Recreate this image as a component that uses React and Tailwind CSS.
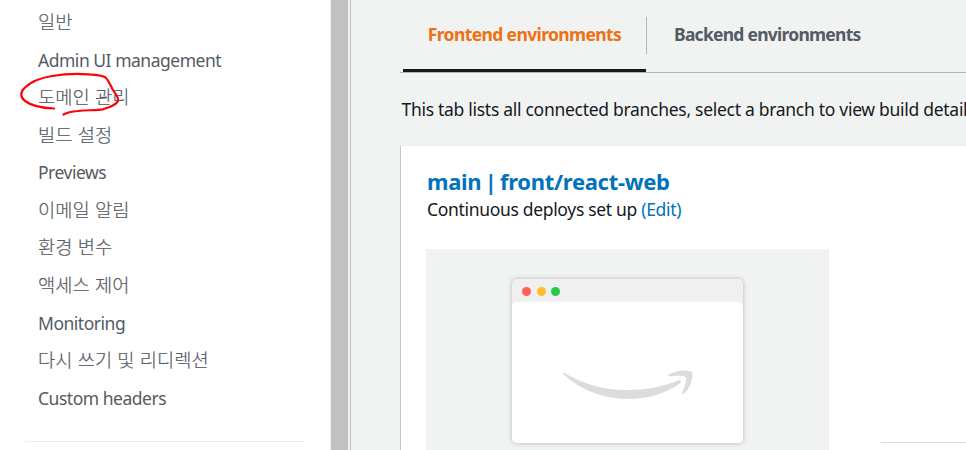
const NAV = [
  { label: '일반', ko: true },
  { label: 'Admin UI management' },
  { label: '도메인 관리', ko: true, marked: true },
  { label: '빌드 설정', ko: true },
  { label: 'Previews' },
  { label: '이메일 알림', ko: true },
  { label: '환경 변수', ko: true },
  { label: '액세스 제어', ko: true },
  { label: 'Monitoring' },
  { label: '다시 쓰기 및 리디렉션', ko: true },
  { label: 'Custom headers' },
];

function Marker() {
  return (
    <svg className="absolute -left-[20px] -top-[7px] overflow-visible" width="104" height="48" viewBox="18 70 104 48" fill="none" stroke="#fb0405" strokeWidth="2.2" strokeLinecap="round" strokeLinejoin="round">
      <path d="M54 108.5C43 108 31 105.500 25 101C20 97 20 92 25 87.500C32 80.500 43 77.500 52 76C64 74 78 73.500 89 74.300C97 75 102 75 105.500 77.500C108.500 80 110 85 113 90C116 95 119 97.500 118 101C117 103.500 112 106.500 103 109.300C96 110.500 88 110 78 111C71 111.500 67 112.500 63.500 114.500" />
    </svg>
  );
}

function Sidebar() {
  return (
    <aside className="flex w-[330px] shrink-0 flex-col bg-white pt-[2px]">
      <nav className="flex flex-col pl-[38px] text-[#545b64]">
        {NAV.map((item) => (
          <a key={item.label} className="relative flex h-[37.6px] items-center whitespace-nowrap">
            {item.ko ? (
              <span className="font-['Noto_Sans_CJK_KR',sans-serif] text-[18.7px] font-light leading-6 tracking-[0.05px] [word-spacing:1px] [-webkit-text-stroke:0.2px_#545b64]">{item.label}</span>
            ) : (
              <span className="pt-[2.5px] font-['Noto_Sans',sans-serif] text-[17.5px] leading-6 tracking-[-0.48px]">{item.label}</span>
            )}
            {item.marked && <Marker />}
          </a>
        ))}
      </nav>
      <hr className="ml-[25px] mt-[25px] w-[279px] border-t border-[#eaeded]" />
    </aside>
  );
}

function BrowserPreview() {
  return (
    <div className="flex h-[210px] w-[403px] justify-center bg-[#f1f3f3] pt-[30px]">
      <div className="flex h-[164px] w-[231px] flex-col rounded-[5px] bg-[#f0f0f0] shadow-[0_0_5px_rgba(0,0,0,0.25)]">
        <div className="flex h-[23px] shrink-0 items-center gap-[5.5px] pl-[10px] pt-px">
          <i className="size-[9px] rounded-full bg-[#ff5f57]" />
          <i className="size-[9px] rounded-full bg-[#ffbd2e]" />
          <i className="size-[9px] rounded-full bg-[#28ca42]" />
        </div>
        <div className="flex-1 rounded-[5px] bg-white">
          <svg className="block" width="231" height="141" viewBox="512 302 231 141" fill="#dcdcdc">
            <path d="M563 374C562 372.700 563.800 372.500 565 373.200C583 384 604 390 627 390C645 390 662 387 678 380.500C681 379.200 682.300 381.600 679.500 383.700C665 394 647 399 628 399C603 399 581 390 563 374Z" />
            <path d="M668 375.300C674 370.500 685 369.300 691.500 371.600C693.500 373 692.200 387 684.500 393.300C683 394.600 681.600 394 682.300 392.300C684 388 687.500 379.500 685.700 377.200C683.900 374.900 674 375.800 669.500 376.300C668 376.500 667.400 375.900 668 375.300Z" />
          </svg>
        </div>
      </div>
    </div>
  );
}

export default function App() {
  return (
    <div className="flex h-[450px] w-[966px] overflow-hidden bg-[#f1f3f3] font-['Noto_Sans',sans-serif] text-[#16191f]">
      <Sidebar />
      <div className="w-[21px] shrink-0 border-r border-[#bfc5c6] bg-[#f1f1f1] pl-px pr-[2px]">
        <div className="h-full bg-[#c1c1c1]" />
      </div>
      <main className="flex min-w-0 flex-1 flex-col pl-[49px]">
        <div className="flex h-[73px] shrink-0 border-b border-[#aab7b8] pl-[3px]">
          <div className="flex w-[243px] shrink-0 justify-center border-b-[3px] border-[#16191f] pt-[22px]">
            <span className="whitespace-nowrap text-[17.5px] font-bold leading-6 tracking-[-0.62px] text-[#ec7211]">Frontend environments</span>
          </div>
          <div className="mt-[17px] h-[37px] w-px bg-[#aab7b8]" />
          <div className="pl-[27px] pt-[22px]">
            <span className="whitespace-nowrap text-[17.5px] font-bold leading-6 tracking-[-0.75px] text-[#545b64]">Backend environments</span>
          </div>
        </div>
        <p className="mt-[24px] h-6 shrink-0 whitespace-nowrap pl-[1.5px] text-[17.5px] leading-6 tracking-[-0.29px]">This tab lists all connected branches, select a branch to view build details</p>
        <section className="mt-[24px] flex flex-1 flex-col border-l border-t border-l-[#c5c9c9] border-t-[#eaeded] bg-white pl-[25px]">
          <h2 className="mt-[21px] whitespace-nowrap pl-px text-[22px] font-bold leading-7 tracking-[-0.3px] text-[#0073bb] [word-spacing:-2px]">main | front/react-web</h2>
          <p className="mt-[2px] whitespace-nowrap pl-px text-[17.5px] leading-6 tracking-[-0.32px]">
            Continuous deploys set up <a className="text-[#0073bb]">(Edit)</a>
          </p>
          <div className="mt-[28px] flex shrink-0">
            <BrowserPreview />
            <div className="ml-[52px] mt-[193px] h-px flex-1 bg-[#d9e0e0]" />
          </div>
        </section>
      </main>
    </div>
  );
}
